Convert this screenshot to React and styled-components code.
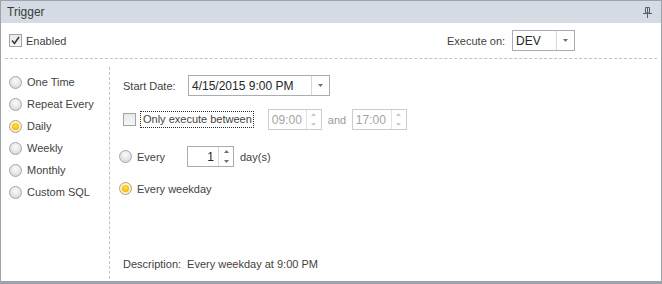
import React from 'react';
import styled, { createGlobalStyle, css } from 'styled-components';

const GlobalStyle = createGlobalStyle`
    html, body {
        margin: 0;
        padding: 0;
        background: #ffffff;
    }
    * {
        box-sizing: border-box;
    }
`;

const Panel = styled.div`
    width: 662px;
    height: 284px;
    display: flex;
    flex-direction: column;
    border: 1px solid #9da3aa;
    border-bottom: 3px solid #9da3aa;
    background: #ffffff;
    font-family: 'Liberation Sans', Arial, sans-serif;
    font-size: 11px;
    color: #3f3f3f;
`;

const Header = styled.div`
    height: 22px;
    flex-shrink: 0;
    display: flex;
    align-items: center;
    justify-content: space-between;
    padding: 0 9px 0 6px;
    background: #d5dbe2;
    font-size: 12px;
    color: #3b3b3b;
`;

const TopBar = styled.div`
    height: 36px;
    flex-shrink: 0;
    display: flex;
    align-items: center;
    padding: 0 82px 0 4px;
    margin: 0 4px;
    border-bottom: 1px dashed #c3c3c3;
`;

const Spacer = styled.div`
    flex-grow: ${(p) => (p.$width ? 0 : 1)};
    width: ${(p) => (p.$width ? `${p.$width}px` : 'auto')};
`;

const Body = styled.div`
    flex-grow: 1;
    display: flex;
`;

const ModeList = styled.div`
    width: 109px;
    flex-shrink: 0;
    margin: 8px 0 2px;
    padding: 4px 0 0 8px;
    border-right: 1px dashed #c3c3c3;
    display: flex;
    flex-direction: column;
`;

const ModeItem = styled.div`
    height: 22px;
    display: flex;
    align-items: center;
`;

const Content = styled.div`
    flex-grow: 1;
    display: flex;
    flex-direction: column;
    padding: 16px 0 9px 9px;
`;

const Row = styled.div`
    height: 21px;
    display: flex;
    align-items: center;
    margin-top: ${(p) => p.$top || 0}px;
    padding-left: ${(p) => p.$indent || 0}px;
`;

const Label = styled.span`
    display: inline-block;
    width: ${(p) => (p.$width ? `${p.$width}px` : 'auto')};
    margin-left: ${(p) => p.$left || 0}px;
    color: ${(p) => (p.$muted ? '#9a9a9a' : 'inherit')};
    white-space: nowrap;
`;

const FocusLabel = styled.span`
    margin-left: 4px;
    padding: 1px 1px 2px 2px;
    border: 1px dotted #2a2a2a;
    white-space: nowrap;
`;

const Description = styled.div`
    margin-top: auto;
    height: 16px;
    display: flex;
    align-items: center;
    padding-left: 4px;
    gap: 6px;
`;

const CheckBox = styled.span`
    width: 13px;
    height: 13px;
    flex-shrink: 0;
    display: inline-flex;
    align-items: center;
    justify-content: center;
    border: 1px solid #a3a3a3;
    background: linear-gradient(#e9e9e9, #f6f6f6);
`;

const RadioCircle = styled.span`
    width: 13px;
    height: 13px;
    flex-shrink: 0;
    border-radius: 50%;
    display: inline-flex;
    align-items: center;
    justify-content: center;
    border: 1px solid #a6a6a6;
    background: radial-gradient(circle at 50% 35%, #fbfbfb 0%, #e2e2e2 60%, #d0d0d0 100%);
    ${(p) =>
        p.$on &&
        css`
            border-color: #b8a370;
            background: radial-gradient(circle at 50% 40%, #fffbe8 0%, #f4ead0 70%, #dccfa8 100%);
        `}
`;

const RadioDot = styled.span`
    width: 7px;
    height: 7px;
    border-radius: 50%;
    background: radial-gradient(circle at 50% 40%, #ffe15a 0%, #fbbf10 55%, #e69a00 100%);
`;

const RadioText = styled.span`
    margin-left: 5px;
    white-space: nowrap;
`;

const Editor = styled.div`
    width: ${(p) => p.$width}px;
    height: 21px;
    display: flex;
    border: 1px solid ${(p) => (p.$disabled ? '#c9ccd0' : '#a9adb3')};
    background: #ffffff;
    color: ${(p) => (p.$disabled ? '#a4a4a4' : '#262626')};
`;

const EditorText = styled.div`
    flex-grow: 1;
    display: flex;
    align-items: center;
    justify-content: ${(p) => (p.$right ? 'flex-end' : 'flex-start')};
    padding: 0 ${(p) => (p.$right ? 4 : 3)}px 0 3px;
    font-size: 12px;
    white-space: nowrap;
`;

const DropButton = styled.div`
    width: 18px;
    flex-shrink: 0;
    display: flex;
    align-items: center;
    justify-content: center;
    border-left: 1px solid #d6d8db;
    background: #ffffff;
`;

const SpinButtons = styled.div`
    width: 15px;
    flex-shrink: 0;
    display: flex;
    flex-direction: column;
    border-left: 1px solid ${(p) => (p.$disabled ? '#e2e3e5' : '#d6d8db')};
`;

const SpinHalf = styled.div`
    flex: 1;
    display: flex;
    align-items: center;
    justify-content: center;
`;

const Arrow = ({ up, color = '#707070' }) => (
    <svg width="5" height="3" viewBox="0 0 5 3">
        {up ? <path d="M2.5 0 L5 3 L0 3 Z" fill={color} /> : <path d="M0 0 L5 0 L2.5 3 Z" fill={color} />}
    </svg>
);

const Check = () => (
    <svg width="9" height="9" viewBox="0 0 9 9">
        <path d="M1 4.5 L3.5 7.5 L8 1" fill="none" stroke="#3a3a3a" strokeWidth="1.6" />
    </svg>
);

const Pin = () => (
    <svg width="9" height="11" viewBox="0 0 9 11">
        <path d="M2.5 0.5 H6.5 V6 H2.5 Z" fill="none" stroke="#5a5f66" />
        <path d="M4.5 1 V6" stroke="#5a5f66" />
        <path d="M0 6.5 H9" stroke="#5a5f66" />
        <path d="M4.5 7 V11" stroke="#5a5f66" />
    </svg>
);

const Radio = ({ on, children }) => (
    <>
        <RadioCircle $on={on}>{on && <RadioDot />}</RadioCircle>
        {children && <RadioText>{children}</RadioText>}
    </>
);

const ComboBox = ({ width, value }) => (
    <Editor $width={width}>
        <EditorText>{value}</EditorText>
        <DropButton>
            <Arrow />
        </DropButton>
    </Editor>
);

const SpinEdit = ({ width, value, disabled, right }) => (
    <Editor $width={width} $disabled={disabled}>
        <EditorText $right={right}>{value}</EditorText>
        <SpinButtons $disabled={disabled}>
            <SpinHalf>
                <Arrow up color={disabled ? '#c8c8c8' : '#707070'} />
            </SpinHalf>
            <SpinHalf>
                <Arrow color={disabled ? '#c8c8c8' : '#707070'} />
            </SpinHalf>
        </SpinButtons>
    </Editor>
);

const modes = ['One Time', 'Repeat Every', 'Daily', 'Weekly', 'Monthly', 'Custom SQL'];

const App = () => {
    const selectedMode = 'Daily';

    return (
        <>
            <GlobalStyle />
            <Panel>
                <Header>
                    <span>Trigger</span>
                    <Pin />
                </Header>
                <TopBar>
                    <CheckBox>
                        <Check />
                    </CheckBox>
                    <Label $left={4}>Enabled</Label>
                    <Spacer />
                    <Label $width={65}>Execute on:</Label>
                    <ComboBox width={63} value="DEV" />
                </TopBar>
                <Body>
                    <ModeList>
                        {modes.map((mode) => (
                            <ModeItem key={mode}>
                                <Radio on={mode === selectedMode}>{mode}</Radio>
                            </ModeItem>
                        ))}
                    </ModeList>
                    <Content>
                        <Row $indent={4}>
                            <Label $width={65}>Start Date:</Label>
                            <ComboBox width={142} value="4/15/2015 9:00 PM" />
                        </Row>
                        <Row $indent={4} $top={13}>
                            <CheckBox />
                            <FocusLabel>Only execute between</FocusLabel>
                            <Spacer $width={14} />
                            <SpinEdit width={54} value="09:00" disabled />
                            <Label $muted $width={24} $left={6}>and</Label>
                            <SpinEdit width={55} value="17:00" disabled />
                        </Row>
                        <Row $top={16}>
                            <Radio on={false} />
                            <Label $width={50} $left={5}>Every</Label>
                            <SpinEdit width={47} value="1" right />
                            <Label $left={6}>day(s)</Label>
                        </Row>
                        <Row $top={11}>
                            <Radio on>Every weekday</Radio>
                        </Row>
                        <Description>
                            <span>Description:</span>
                            <span>Every weekday at 9:00 PM</span>
                        </Description>
                    </Content>
                </Body>
            </Panel>
        </>
    );
};

export default App;
